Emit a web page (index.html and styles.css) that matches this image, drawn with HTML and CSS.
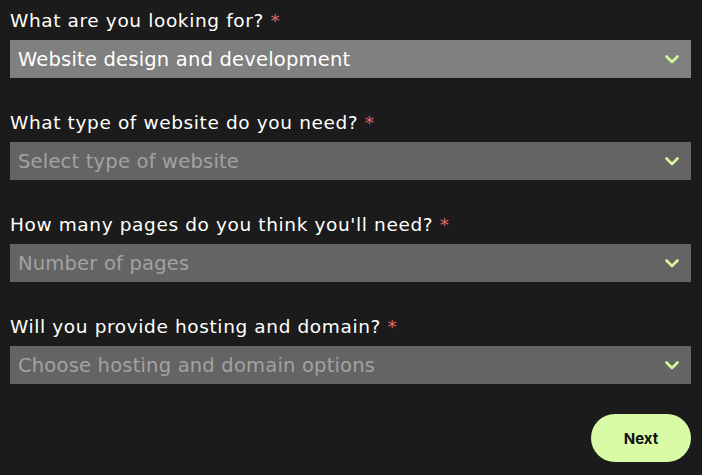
FILE: index.html
```html
<!DOCTYPE html>
<html lang="en">
<head>
<meta charset="utf-8">
<title>Project form</title>
<link rel="stylesheet" href="styles.css">
</head>
<body>
<form class="form">
  <div class="field">
    <div class="label">What are you looking for? <span class="req">*</span></div>
    <div class="select filled">
      <span class="value">Website design and development</span>
      <svg class="chev" width="14" height="9" viewBox="0 0 14 9"><path d="M1.5 1.5 L7 7 L12.5 1.5" fill="none" stroke="#d6f79c" stroke-width="2.6" stroke-linecap="round" stroke-linejoin="round"/></svg>
    </div>
  </div>
  <div class="field">
    <div class="label">What type of website do you need? <span class="req">*</span></div>
    <div class="select">
      <span class="value placeholder">Select type of website</span>
      <svg class="chev" width="14" height="9" viewBox="0 0 14 9"><path d="M1.5 1.5 L7 7 L12.5 1.5" fill="none" stroke="#d6f79c" stroke-width="2.6" stroke-linecap="round" stroke-linejoin="round"/></svg>
    </div>
  </div>
  <div class="field">
    <div class="label">How many pages do you think you'll need? <span class="req">*</span></div>
    <div class="select">
      <span class="value placeholder">Number of pages</span>
      <svg class="chev" width="14" height="9" viewBox="0 0 14 9"><path d="M1.5 1.5 L7 7 L12.5 1.5" fill="none" stroke="#d6f79c" stroke-width="2.6" stroke-linecap="round" stroke-linejoin="round"/></svg>
    </div>
  </div>
  <div class="field">
    <div class="label">Will you provide hosting and domain? <span class="req">*</span></div>
    <div class="select">
      <span class="value placeholder">Choose hosting and domain options</span>
      <svg class="chev" width="14" height="9" viewBox="0 0 14 9"><path d="M1.5 1.5 L7 7 L12.5 1.5" fill="none" stroke="#d6f79c" stroke-width="2.6" stroke-linecap="round" stroke-linejoin="round"/></svg>
    </div>
  </div>
  <div class="actions">
    <button type="button" class="next">Next</button>
  </div>
</form>
</body>
</html>
```

FILE: styles.css
```css
html, body {
  margin: 0;
  padding: 0;
  background: #1b1b1b;
}
body {
  font-family: "DejaVu Sans", "Open Sans", sans-serif;
  color: #ffffff;
}
.form {
  padding: 8px 11px 0 10px;
  display: flex;
  flex-direction: column;
  gap: 32px;
}
.field {
  display: flex;
  flex-direction: column;
  gap: 6px;
}
.label {
  font-size: 18.5px;
  line-height: 26px;
  height: 26px;
  letter-spacing: 0.62px;
}
.req {
  color: #e06a6a;
}
.select {
  height: 38px;
  background: #646464;
  display: flex;
  align-items: center;
  justify-content: space-between;
  padding: 0 12px 0 8px;
}
.select.filled {
  background: #808080;
}
.value {
  font-size: 19.5px;
  color: #ffffff;
  letter-spacing: 0.2px;
}
.value.placeholder {
  color: #a2a2a2;
}
.chev {
  display: block;
}
.actions {
  display: flex;
  justify-content: flex-end;
  margin-top: -2px;
}
.next {
  width: 100px;
  height: 48px;
  border: none;
  border-radius: 24px;
  background: #d9fba6;
  color: #111111;
  font-family: "Inter", "Liberation Sans", sans-serif;
  font-weight: 700;
  font-size: 15px;
}
```
